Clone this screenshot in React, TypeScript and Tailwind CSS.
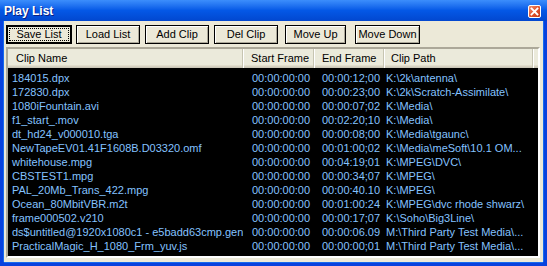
import React from 'react';

type Clip = {
  name: string;
  start: string;
  end: string;
  path: string;
};

const clips: Clip[] = [
  { name: '184015.dpx', start: '00:00:00:00', end: '00:00:12;00', path: 'K:\\2k\\antenna\\' },
  { name: '172830.dpx', start: '00:00:00:00', end: '00:00:23;00', path: 'K:\\2k\\Scratch-Assimilate\\' },
  { name: '1080iFountain.avi', start: '00:00:00:00', end: '00:00:07;02', path: 'K:\\Media\\' },
  { name: 'f1_start_.mov', start: '00:00:00:00', end: '00:02:20;10', path: 'K:\\Media\\' },
  { name: 'dt_hd24_v000010.tga', start: '00:00:00:00', end: '00:00:08;00', path: 'K:\\Media\\tgaunc\\' },
  { name: 'NewTapeEV01.41F1608B.D03320.omf', start: '00:00:00:00', end: '00:01:00;02', path: 'K:\\Media\\meSoft\\10.1 OM...' },
  { name: 'whitehouse.mpg', start: '00:00:00:00', end: '00:04:19;01', path: 'K:\\MPEG\\DVC\\' },
  { name: 'CBSTEST1.mpg', start: '00:00:00:00', end: '00:00:34;07', path: 'K:\\MPEG\\' },
  { name: 'PAL_20Mb_Trans_422.mpg', start: '00:00:00:00', end: '00:00:40.10', path: 'K:\\MPEG\\' },
  { name: 'Ocean_80MbitVBR.m2t', start: '00:00:00:00', end: '00:01:00:24', path: 'K:\\MPEG\\dvc rhode shwarz\\' },
  { name: 'frame000502.v210', start: '00:00:00:00', end: '00:00:17;07', path: 'K:\\Soho\\Big3Line\\' },
  { name: 'ds$untitled@1920x1080c1 - e5badd63cmp.gen', start: '00:00:00:00', end: '00:00:06.09', path: 'M:\\Third Party Test Media\\...' },
  { name: 'PracticalMagic_H_1080_Frm_yuv.js', start: '00:00:00:00', end: '00:00:00;01', path: 'M:\\Third Party Test Media\\...' },
];

const buttons = [
  { label: 'Save List', cls: 'ml-[2px] w-[66px]', focused: true },
  { label: 'Load List', cls: 'ml-[4px] w-[64px]' },
  { label: 'Add Clip', cls: 'ml-[5px] w-[64px]' },
  { label: 'Del Clip', cls: 'ml-[5px] w-[64px]' },
  { label: 'Move Up', cls: 'ml-[7px] w-[61px]' },
  { label: 'Move Down', cls: 'ml-[9px] w-[65px]' },
];

function HeaderCell({ label, cls }: { label: string; cls: string }) {
  return (
    <div className={`h-full flex items-center border-r border-[#c7c5b2] shadow-[1px_0_0_#ffffff] ${cls}`}>
      {label}
    </div>
  );
}

export default function App() {
  return (
    <div
      className="w-[547px] h-[266px] flex flex-col bg-[#0842de] text-[11px] leading-none"
      style={{ fontFamily: '"Liberation Sans", Arial, sans-serif' }}
    >
      {/* caption */}
      <div className="h-[21px] flex items-center justify-between pl-[4px] pr-[6px] bg-gradient-to-b from-[#3c8efc] via-[#0458e6] to-[#0247cf]">
        <span className="text-white font-bold text-[12px] [text-shadow:1px_1px_#0a1e80]">Play List</span>
        <div className="w-[13px] h-[13px] mt-[1px] rounded-[2px] border border-white bg-gradient-to-br from-[#f08c6a] via-[#e2562f] to-[#c23a12] flex items-center justify-center">
          <svg width="9" height="9" viewBox="0 0 9 9">
            <path d="M1.5 1.5 L7.5 7.5 M7.5 1.5 L1.5 7.5" stroke="white" strokeWidth="1.8" strokeLinecap="square" />
          </svg>
        </div>
      </div>

      {/* client */}
      <div className="flex-1 ml-[4px] mr-[4px] mb-[4px] bg-[#ece9d8] flex flex-col shadow-[-1px_0_#166aee,1px_0_#166aee,0_1px_#166aee]">
        <div className="flex mt-[4px] h-[19px]">
          {buttons.map((b) => (
            <div
              key={b.label}
              className={`h-full flex items-center justify-center bg-[#ece9d8] text-black ${b.cls} ${
                b.focused
                  ? 'border-2 border-black p-[1px]'
                  : 'border border-black shadow-[inset_1px_1px_#ffffff,inset_-1px_-1px_#aca899]'
              }`}
            >
              {b.focused ? (
                <span className="w-full h-full flex items-center justify-center border border-dotted border-black">
                  {b.label}
                </span>
              ) : (
                b.label
              )}
            </div>
          ))}
        </div>

        {/* list view */}
        <div className="flex-1 mt-[3px] ml-[2px] mr-[3px] mb-[4px] border-2 border-t-[#aca899] border-l-[#aca899] border-b-[#ffffff] border-r-[#ffffff] flex flex-col bg-black">
          <div className="h-[19px] flex bg-[#ebeadb] text-black shadow-[inset_0_-1px_#cbc7b8,inset_0_-2px_#d6d2c2,inset_0_-3px_#e2decd]">
            <HeaderCell label="Clip Name" cls="w-[235px] pl-[8px]" />
            <HeaderCell label="Start Frame" cls="w-[71px] pl-[8px]" />
            <HeaderCell label="End Frame" cls="w-[70px] pl-[8px]" />
            <HeaderCell label="Clip Path" cls="w-[149px] pl-[7px]" />
            <div className="flex-1" />
          </div>
          <div className="flex-1 pt-[3px] text-[#84c2ff]">
            {clips.map((c) => (
              <div key={c.name} className="h-[14px] flex items-center whitespace-nowrap">
                <div className="w-[235px] pl-[4px] overflow-hidden">{c.name}</div>
                <div className="w-[71px] pl-[9px]">{c.start}</div>
                <div className="w-[70px] pl-[8px]">{c.end}</div>
                <div className="w-[149px] pl-[2px] overflow-hidden">{c.path}</div>
              </div>
            ))}
          </div>
        </div>
      </div>
    </div>
  );
}
